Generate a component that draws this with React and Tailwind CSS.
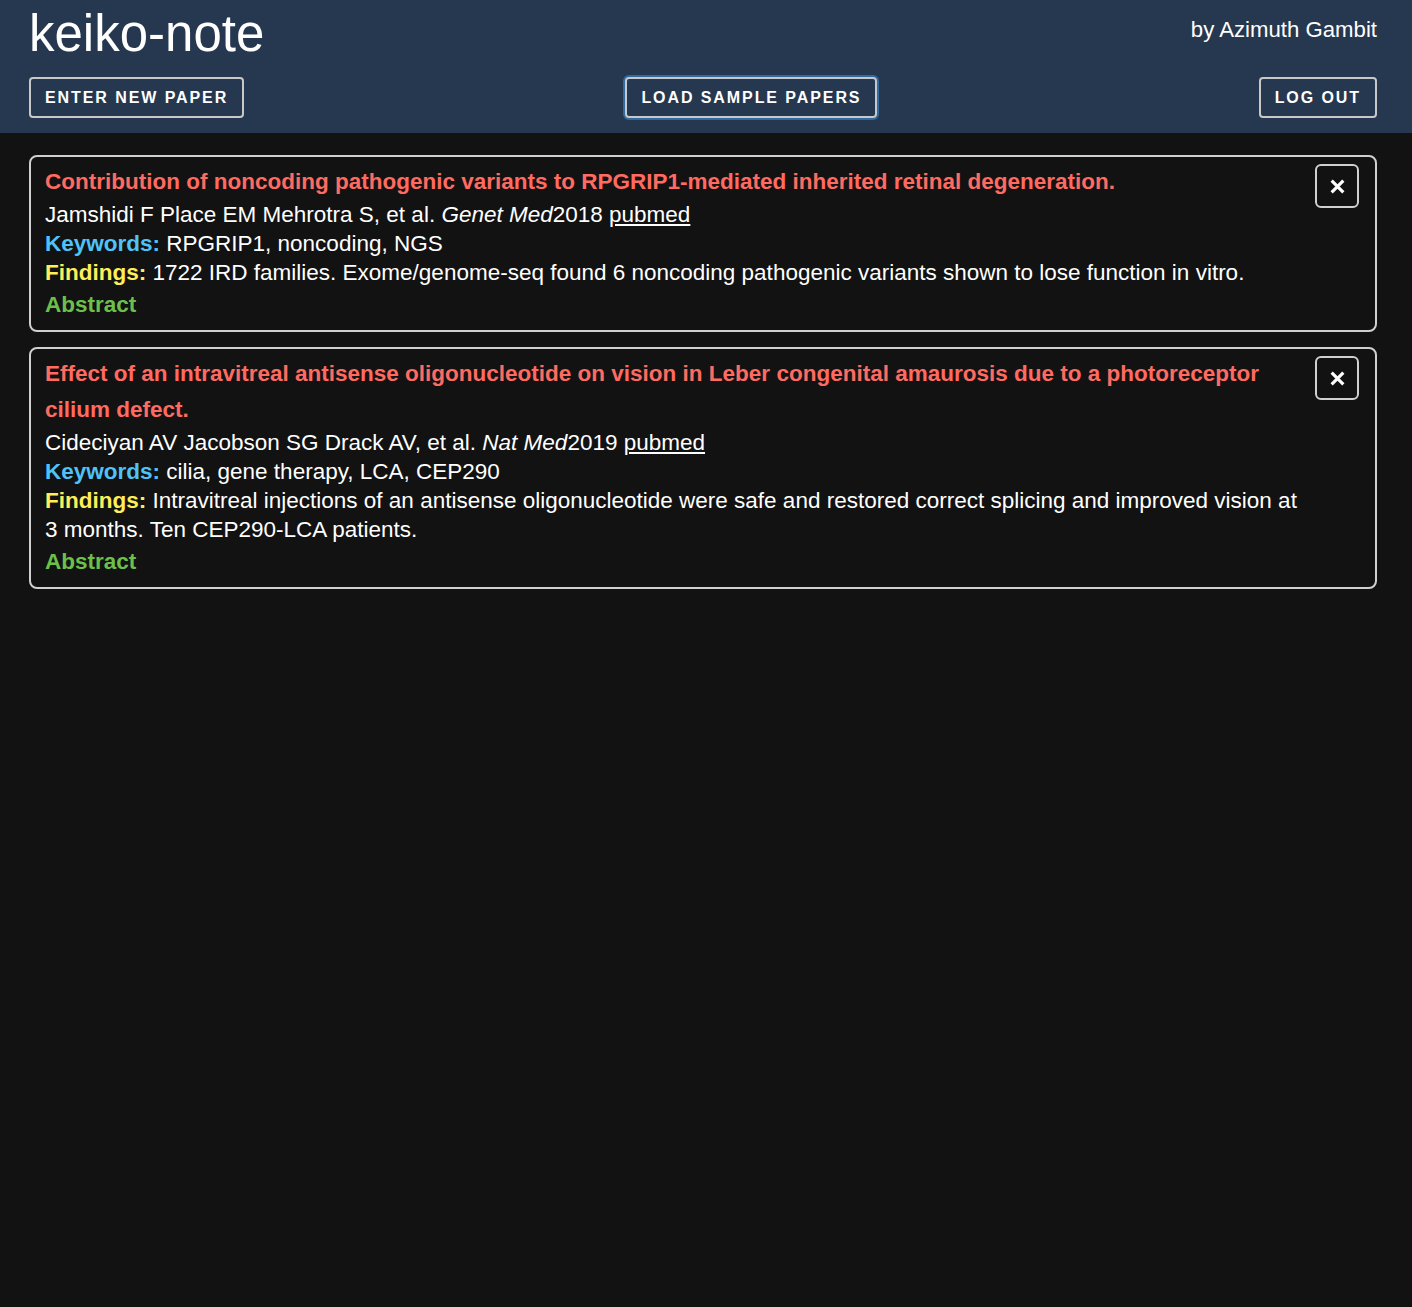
import React from 'react';

const PAPERS = [
  {
    title: 'Contribution of noncoding pathogenic variants to RPGRIP1-mediated inherited retinal degeneration.',
    authors: 'Jamshidi F Place EM Mehrotra S, et al.',
    journal: 'Genet Med',
    year: '2018',
    keywords: 'RPGRIP1, noncoding, NGS',
    findings: '1722 IRD families. Exome/genome-seq found 6 noncoding pathogenic variants shown to lose function in vitro.',
  },
  {
    title: 'Effect of an intravitreal antisense oligonucleotide on vision in Leber congenital amaurosis due to a photoreceptor cilium defect.',
    authors: 'Cideciyan AV Jacobson SG Drack AV, et al.',
    journal: 'Nat Med',
    year: '2019',
    keywords: 'cilia, gene therapy, LCA, CEP290',
    findings: 'Intravitreal injections of an antisense oligonucleotide were safe and restored correct splicing and improved vision at 3 months. Ten CEP290-LCA patients.',
  },
];

function HeaderButton({ children, focused }) {
  return (
    <button
      className={
        'h-[41px] px-[14px] rounded-[4px] border-2 border-[#c8c8c8] text-white text-[16px] font-bold uppercase tracking-[0.12em] leading-none ' +
        (focused ? 'ring-2 ring-[#2f6aa3]' : '')
      }
    >
      {children}
    </button>
  );
}

function PaperCard({ paper }) {
  return (
    <div className="flex gap-4 rounded-[8px] border-2 border-[#d0d0d0] pl-[14px] pr-[16px] pt-[7px] pb-[7px]">
      <div className="flex-1 min-w-0">
        <div className="text-[22.5px] leading-[36px] font-bold text-[#ff6b60]">{paper.title}</div>
        <div className="text-[22.5px] leading-[29px] text-white">
          {paper.authors} <i>{paper.journal}</i>{paper.year}{' '}
          <a className="underline">pubmed</a>
        </div>
        <div className="text-[22.5px] leading-[29px] text-white">
          <span className="font-bold text-[#4fc3f7]">Keywords:</span> {paper.keywords}
        </div>
        <div className="text-[22.5px] leading-[29px] text-white">
          <span className="font-bold text-[#ffee58]">Findings:</span> {paper.findings}
        </div>
        <div className="text-[22.5px] leading-[36px] font-bold text-[#6cc04a]">Abstract</div>
      </div>
      <button className="mt-0 w-[44px] h-[44px] shrink-0 flex items-center justify-center rounded-[6px] border-2 border-[#d0d0d0]">
        <svg width="17" height="17" viewBox="0 0 16 16">
          <path d="M2.5 2.5 L13.5 13.5 M13.5 2.5 L2.5 13.5" stroke="white" strokeWidth="3" strokeLinecap="butt" />
        </svg>
      </button>
    </div>
  );
}

export default function App() {
  return (
    <div className="min-h-[1307px] bg-[#121212]" style={{ fontFamily: '"Liberation Sans", Arial, sans-serif' }}>
      {/* Header */}
      <header className="bg-[#263850] pl-[29px] pr-[35px] pb-[15px]">
        <div className="flex items-start justify-between">
          <h1 className="text-[51px] leading-[68px] text-white font-normal">keiko-note</h1>
          <div className="text-[22.2px] leading-none text-white pt-[19px]">by Azimuth Gambit</div>
        </div>
        <div className="flex items-center justify-between mt-[9px]">
          <HeaderButton>Enter new paper</HeaderButton>
          <HeaderButton focused>Load sample papers</HeaderButton>
          <HeaderButton>Log out</HeaderButton>
        </div>
      </header>

      {/* Papers */}
      <main className="pl-[29px] pr-[35px] pt-[22px] flex flex-col gap-[15px]">
        {PAPERS.map((p) => (
          <PaperCard key={p.title} paper={p} />
        ))}
      </main>
    </div>
  );
}
